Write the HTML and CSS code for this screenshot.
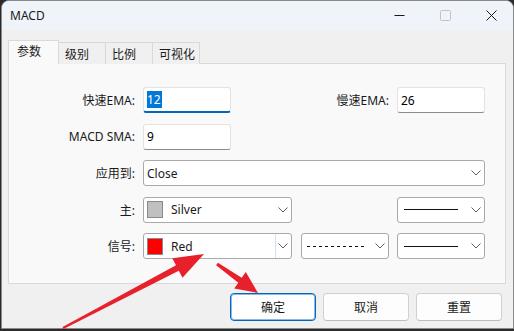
FILE: index.html
```html
<!DOCTYPE html>
<html>
<head>
<meta charset="utf-8">
<link rel="stylesheet" href="styles.css">
</head>
<body>
<div class="window">
  <div class="titlebar">
    <span class="title">MACD</span>
    <div class="caps">
      <div class="cap"><svg width="11" height="11" viewBox="0 0 11 11"><line x1="0.5" y1="5.5" x2="10.5" y2="5.5" stroke="#1a1a1a" stroke-width="1"/></svg></div>
      <div class="cap"><svg width="11" height="11" viewBox="0 0 11 11"><rect x="0.5" y="0.5" width="10" height="10" rx="1" fill="none" stroke="#c4c4c4" stroke-width="1"/></svg></div>
      <div class="cap"><svg width="11" height="11" viewBox="0 0 11 11"><path d="M0.5 0.5 L10.5 10.5 M10.5 0.5 L0.5 10.5" stroke="#1a1a1a" stroke-width="1" fill="none"/></svg></div>
    </div>
  </div>
  <div class="client">
    <div class="tabs">
      <div class="tab active">参数</div>
      <div class="tab">级别</div>
      <div class="tab">比例</div>
      <div class="tab last">可视化</div>
    </div>
    <div class="panel">
      <div class="form">
        <div class="lbl">快速EMA:</div>
        <div class="ctl">
          <div class="inp focused"><span class="sel">12</span></div>
          <span class="lbl2">慢速EMA:</span>
          <div class="inp">26</div>
        </div>

        <div class="lbl">MACD SMA:</div>
        <div class="ctl">
          <div class="inp">9</div>
        </div>

        <div class="lbl">应用到:</div>
        <div class="ctl">
          <div class="cb wide"><span class="txt">Close</span><svg class="chev" width="10" height="6" viewBox="0 0 10 6"><path d="M0.5 0.5 L5 5 L9.5 0.5" fill="none" stroke="#5f5f5f" stroke-width="1"/></svg></div>
        </div>

        <div class="lbl">主:</div>
        <div class="ctl">
          <div class="cb color"><span class="sw silver"></span><span class="txt">Silver</span><svg class="chev" width="10" height="6" viewBox="0 0 10 6"><path d="M0.5 0.5 L5 5 L9.5 0.5" fill="none" stroke="#5f5f5f" stroke-width="1"/></svg></div>
          <div class="cb line push"><span class="solid"></span><svg class="chev" width="10" height="6" viewBox="0 0 10 6"><path d="M0.5 0.5 L5 5 L9.5 0.5" fill="none" stroke="#5f5f5f" stroke-width="1"/></svg></div>
        </div>

        <div class="lbl">信号:</div>
        <div class="ctl">
          <div class="cb color"><span class="sw red"></span><span class="txt">Red</span><span class="divider"></span><svg class="chev near" width="10" height="6" viewBox="0 0 10 6"><path d="M0.5 0.5 L5 5 L9.5 0.5" fill="none" stroke="#5f5f5f" stroke-width="1"/></svg></div>
          <div class="cb line gap9"><span class="dashed"></span><svg class="chev" width="10" height="6" viewBox="0 0 10 6"><path d="M0.5 0.5 L5 5 L9.5 0.5" fill="none" stroke="#5f5f5f" stroke-width="1"/></svg></div>
          <div class="cb line gap8"><span class="solid"></span><svg class="chev" width="10" height="6" viewBox="0 0 10 6"><path d="M0.5 0.5 L5 5 L9.5 0.5" fill="none" stroke="#5f5f5f" stroke-width="1"/></svg></div>
        </div>
      </div>
    </div>
    <div class="btns">
      <div class="btn default">确定</div>
      <div class="btn">取消</div>
      <div class="btn">重置</div>
    </div>
  </div>
</div>
<svg class="arrows" width="514" height="331" viewBox="0 0 514 331">
  <polygon points="62.5,327.1 176,265.3 172.3,258.3 204,254 182.5,277.7 178.8,270.7 63.5,328.9" fill="#e8202b"/>
  <polygon points="217.9,262.8 241.7,277.8 245.8,272.1 258,293 234.2,288.5 238.3,282.8 216.1,265.2" fill="#e8202b"/>
</svg>
</body>
</html>
```

FILE: styles.css
```css
* { box-sizing: border-box; }
html, body { margin: 0; padding: 0; }
body {
  width: 514px;
  height: 331px;
  overflow: hidden;
  background: #2b2b2b;
  font-family: "Noto Sans", "Noto Sans CJK SC", sans-serif;
  font-size: 12px;
  color: #000;
  position: relative;
}
.window {
  margin-left: 1px;
  width: 513px;
  height: 329px;
  border: 1px solid #8a8a8a;
  border-radius: 8px 8px 0 0;
  background: #f0f0f0;
  overflow: hidden;
  display: flex;
  flex-direction: column;
}
.titlebar {
  height: 29px;
  flex: none;
  background: #eef4f9;
  display: flex;
  align-items: center;
}
.title {
  flex: 1;
  padding-left: 8px;
  color: #1a1a1a;
}
.caps { display: flex; height: 100%; padding-right: 0; }
.cap {
  width: 46px;
  height: 100%;
  display: flex;
  align-items: center;
  justify-content: center;
  padding-left: 2px;
}
.cap svg { display: block; }
.client {
  flex: 1;
  display: flex;
  flex-direction: column;
}
.tabs {
  display: flex;
  align-items: flex-end;
  height: 34px;
  padding: 10px 0 0 6px;
  margin-bottom: -1px;
  position: relative;
  z-index: 1;
}
.tab {
  height: 22px;
  width: 47px;
  padding: 3px 0 0 6px;
  line-height: 17px;
  background: #f0f0f0;
  border: 1px solid #d9d9d9;
  border-bottom: none;
  border-left: none;
  color: #1a1a1a;
}
.tab.active {
  width: 51px;
  height: 24px;
  padding: 2px 0 0 8px;
  background: #f9f9f9;
  border-left: 1px solid #d9d9d9;
}
.panel {
  margin: 0 7px 0 6px;
  height: 221px;
  background: #f9f9f9;
  border: 1px solid #d9d9d9;
  padding-top: 23px;
}
.form {
  display: grid;
  grid-template-columns: 126px 342px;
  grid-auto-rows: 26px;
  column-gap: 8px;
  row-gap: 10.5px;
}
.lbl {
  text-align: right;
  align-self: center;
  color: #1a1a1a;
}
.ctl {
  display: flex;
  align-items: center;
}
.lbl2 {
  margin-left: auto;
  margin-right: 8px;
  color: #1a1a1a;
}
.inp {
  width: 88px;
  height: 26px;
  background: #fff;
  border: 1px solid #e3e3e3;
  border-bottom-color: #8b8b8b;
  border-radius: 3px;
  padding: 0 3px;
  display: flex;
  align-items: center;
  line-height: 17px;
}
.inp.focused { border-bottom: 2px solid #0067c0; }
.sel {
  background: #0078d7;
  color: #fff;
  padding: 0 1px 0 0;
}
.cb {
  height: 26px;
  background: #fff;
  border: 1px solid #a9a9a9;
  border-radius: 3px;
  display: flex;
  align-items: center;
  padding-left: 3px;
}
.cb.wide { width: 342px; }
.cb.color { width: 149px; }
.cb.line { width: 88px; padding-left: 6px; }
.cb.push { margin-left: auto; }
.cb.gap9 { margin-left: 9px; padding-left: 5px; }
.cb.gap8 { margin-left: 8px; }
.chev { margin-left: auto; margin-right: 3px; display: block; }
.chev.near { margin-left: 2px; }
.divider {
  margin-left: auto;
  align-self: stretch;
  width: 0;
  border-left: 1px solid #d3e1ee;
}
.sw {
  width: 16px;
  height: 17px;
  border: 1px solid #8a8a8a;
  margin-right: 8px;
  flex: none;
}
.sw.silver { background: #c0c0c0; }
.sw.red { background: #ff0000; }
.txt { color: #1a1a1a; }
.solid {
  width: 54px;
  height: 0;
  border-top: 1px solid #111;
}
.dashed {
  width: 58px;
  height: 1px;
  background: repeating-linear-gradient(90deg, #111 0 3px, transparent 3px 6px);
}
.btns {
  display: flex;
  justify-content: flex-end;
  gap: 7px;
  padding-right: 11px;
  margin-top: 9px;
}
.btn {
  width: 86px;
  height: 28px;
  background: #fdfdfd;
  border: 1px solid #d0d0d0;
  border-bottom-color: #bdbdbd;
  border-radius: 4px;
  display: flex;
  align-items: center;
  justify-content: center;
  color: #1a1a1a;
}
.btn.default {
  background: #fff;
  border: 1px solid #0067c0;
  box-shadow: inset 0 0 0 1px rgba(0, 103, 192, 0.45);
}
.arrows {
  position: absolute;
  left: 0;
  top: 0;
  pointer-events: none;
}
```
